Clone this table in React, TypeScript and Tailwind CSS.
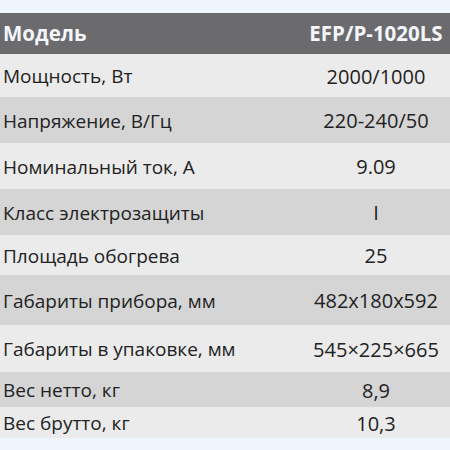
import React from "react";

const rows: { label: string; value: string; h: string; dark: boolean }[] = [
  { label: "Мощность, Вт", value: "2000/1000", h: "h-[43px]", dark: false },
  { label: "Напряжение, В/Гц", value: "220-240/50", h: "h-[46px]", dark: true },
  { label: "Номинальный ток, А", value: "9.09", h: "h-[46px]", dark: false },
  { label: "Класс электрозащиты", value: "I", h: "h-[46px]", dark: true },
  { label: "Площадь обогрева", value: "25", h: "h-[40px]", dark: false },
  { label: "Габариты прибора, мм", value: "482x180x592", h: "h-[50px]", dark: true },
  { label: "Габариты в упаковке, мм", value: "545×225×665", h: "h-[47px]", dark: false },
  { label: "Вес нетто, кг", value: "8,9", h: "h-[35px]", dark: true },
  { label: "Вес брутто, кг", value: "10,3", h: "h-[31px]", dark: false },
];

export default function App() {
  return (
    <div className="w-[450px] h-[450px] bg-[#eef5fc] flex flex-col pt-[13px] overflow-hidden" style={{ fontFamily: "'Open Sans', sans-serif" }}>
      <div className="h-[41px] bg-[#6b6b6d] flex items-center text-[#f3f6fb] font-bold text-[20.5px]">
        <div className="flex-1 pl-[3px]">Модель</div>
        <div className="w-[148px] text-center">EFP/P-1020LS</div>
      </div>
      {rows.map((r) => (
        <div key={r.label} className={`${r.h} ${r.dark ? "bg-[#d5d5d5]" : "bg-[#ebebeb]"} flex items-center text-[#222222]`}>
          <div className="flex-1 pl-[3px] pt-[2px] text-[19px]">{r.label}</div>
          <div className="w-[148px] text-center pt-[2px] text-[20px]">{r.value}</div>
        </div>
      ))}
    </div>
  );
}
